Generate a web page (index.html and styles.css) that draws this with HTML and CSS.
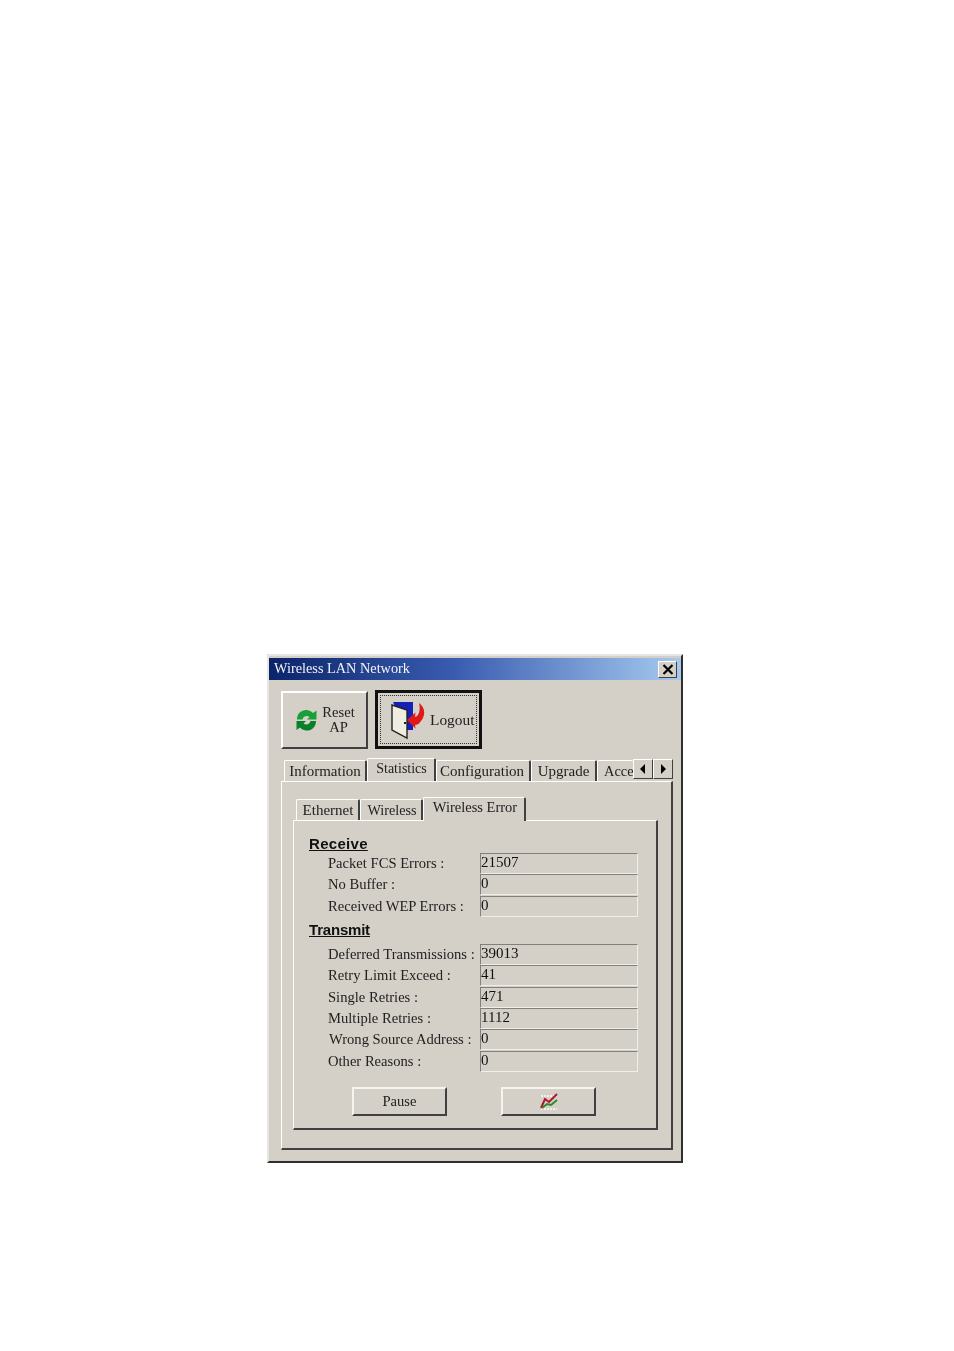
FILE: index.html
```html
<!DOCTYPE html>
<html lang="en">
<head>
<meta charset="utf-8">
<title>Wireless LAN Network</title>
<link rel="stylesheet" href="styles.css">
</head>
<body>
<main class="page">
  <section class="window">
    <header class="titlebar">
      <span class="title">Wireless LAN Network</span>
      <span class="close"><svg viewBox="0 0 12 11" width="12" height="11"><path d="M1.500 1 L10.500 10 M10.500 1 L1.500 10" stroke="#000" stroke-width="2.200" fill="none"/></svg></span>
    </header>
    <div class="toolbar">
      <button class="tool reset">
        <svg viewBox="0 0 24 24" width="24" height="24">
          <path d="M3 11.500 C3 5 8 1.500 13 2 C16 2.500 17.500 3.500 19 5 L22.500 2.500 L22.500 11.500 L13 11.500 L15.500 9 C13.500 7.500 9.500 7.500 8.500 11.500 Z" fill="#18a038"/>
          <path d="M22 13 C22 19.500 17 23 12 22.500 C9 22 7.500 21 6 19.500 L2.500 22 L2.500 13 L12 13 L9.500 15.500 C11.500 17 15.500 17 16.500 13 Z" fill="#0a7f2a"/>
        </svg>
        <span class="reset-label">Reset<br>AP</span>
      </button>
      <button class="tool logout">
        <span class="focus">
          <svg viewBox="0 0 36 40" width="36" height="40">
            <path d="M4 2 H24 V30 H16 Z" fill="#1420b8"/>
            <path d="M3 5 L18 10 V38 L3 30 Z" fill="#efeddf" stroke="#222" stroke-width="1.400"/>
            <rect x="15" y="22" width="2" height="2" fill="#222"/>
            <path d="M30 3 C36 7 37 15 32 21 C30 24 28 25 26 25 L26.500 28.500 L18 20 L26.500 12.500 L26 17 C29 17 32 11 30 3 Z" fill="#e01818"/>
          </svg>
          <span>Logout</span>
        </span>
      </button>
    </div>
    <nav class="tabs outer-tabs">
      <div class="tab-strip">
        <span class="tab t-info">Information</span>
        <span class="tab active t-stat">Statistics</span>
        <span class="tab t-conf">Configuration</span>
        <span class="tab t-upg">Upgrade</span>
        <span class="tab t-acc">Acce</span>
      </div>
      <div class="scrollers">
        <span class="scroll"><svg viewBox="0 0 8 10" width="8" height="10"><path d="M6 0 V10 L1 5 Z" fill="#000"/></svg></span>
        <span class="scroll"><svg viewBox="0 0 8 10" width="8" height="10"><path d="M2 0 V10 L7 5 Z" fill="#000"/></svg></span>
      </div>
    </nav>
    <div class="panel">
      <nav class="tabs inner-tabs">
        <span class="tab t-eth">Ethernet</span>
        <span class="tab t-wl">Wireless</span>
        <span class="tab active t-wle">Wireless Error</span>
      </nav>
      <div class="inner-panel">
        <h2 class="heading first">Receive</h2>
        <div class="rows">
          <div class="row"><label>Packet FCS Errors :</label><output>21507</output></div>
          <div class="row"><label>No Buffer :</label><output>0</output></div>
          <div class="row"><label>Received WEP Errors :</label><output>0</output></div>
        </div>
        <h2 class="heading second">Transmit</h2>
        <div class="rows">
          <div class="row"><label>Deferred Transmissions :</label><output>39013</output></div>
          <div class="row"><label>Retry Limit Exceed :</label><output>41</output></div>
          <div class="row"><label>Single Retries :</label><output>471</output></div>
          <div class="row"><label>Multiple Retries :</label><output>1112</output></div>
          <div class="row"><label class="nudge">Wrong Source Address :</label><output>0</output></div>
          <div class="row"><label>Other Reasons :</label><output>0</output></div>
        </div>
        <div class="actions">
          <button class="action">Pause</button>
          <button class="action">
            <svg class="chart" viewBox="0 0 20 18" width="20" height="18">
              <path d="M2 3 H18 M2 16 H18" stroke="#f2f0e8" stroke-width="2" stroke-dasharray="2 1"/>
              <path d="M2 15 L6 6 L10 9 L18 1" stroke="#b01828" stroke-width="2" fill="none"/>
              <path d="M3 15 L8 11 L12 12 L18 7" stroke="#2c8a2c" stroke-width="2" fill="none"/>
            </svg>
          </button>
        </div>
      </div>
    </div>
  </section>
</main>
</body>
</html>
```
FILE: styles.css
```css
* { box-sizing: border-box; }
html, body { margin: 0; padding: 0; background: #fff; }
.page { width: 954px; height: 1351px; padding: 654px 0 0 267px; overflow: hidden; }

.window {
  width: 416px;
  height: 509px;
  background: #d4d0c8;
  border-style: solid;
  border-width: 2px;
  border-color: #e8e6e0 #303030 #303030 #e8e6e0;
  font-family: "Liberation Serif", serif;
  font-size: 14.600px;
  color: #222;
  filter: blur(0.35px);
}

.titlebar {
  height: 22px;
  margin-top: 2px;
  display: flex;
  align-items: center;
  justify-content: space-between;
  padding: 0 4px 0 5px;
  background: linear-gradient(90deg, #0a246a 0%, #3a5cb0 45%, #a6caf0 100%);
  color: #f4f4f4;
  font-size: 14.300px;
}
.title { position: relative; top: -1px; }
.close {
  width: 19px; height: 17px;
  display: flex; align-items: center; justify-content: center;
  background: #d4d0c8;
  border: 1px solid; border-color: #fff #404040 #404040 #fff;
}

button { font: inherit; color: inherit; background: #d4d0c8; padding: 0; }

.toolbar { display: flex; align-items: flex-start; gap: 7px; padding: 10px 0 0 12px; height: 78px; }
.tool { display: flex; align-items: center; justify-content: center; }
.reset {
  width: 87px; height: 58px; margin-top: 1px;
  gap: 4px;
  border: 2px solid; border-color: #fff #404040 #404040 #fff;
}
.reset-label { line-height: 15px; text-align: center; }
.logout {
  width: 107px; height: 59px;
  border: 3px solid #111;
  padding: 2px;
  font-size: 15.400px;
}
.focus {
  width: 100%; height: 100%;
  display: flex; align-items: center; gap: 5px;
  padding-left: 8px;
  border: 1px dotted #333;
}

.tabs { display: flex; align-items: flex-end; font-size: 15px; }
.tab {
  display: flex; align-items: center; justify-content: center;
  white-space: nowrap;
  height: 21px;
  padding-top: 1px;
  background: #d4d0c8;
  border: solid; border-width: 1px 2px 0 1px;
  border-color: #fff #404040 #fff #fff;
  border-radius: 2px 2px 0 0;
}
.tab.active {
  height: 24px;
  padding-bottom: 5px;
  margin-bottom: -1px;
  position: relative;
  font-size: 14.500px;
}

.outer-tabs { height: 23px; margin-left: 15px; width: 389px; position: relative; z-index: 1; }
.tab-strip { display: flex; align-items: flex-end; width: 349px; height: 100%; overflow: hidden; }
.t-info { width: 83px; flex: none; }
.tab.active.t-stat { width: 69px; flex: none; font-size: 14px; padding-left: 1px; }
.t-conf { width: 95px; flex: none; padding-right: 2px; }
.t-upg { width: 66px; flex: none; }
.t-acc { width: 36px; flex: none; justify-content: flex-start; padding-left: 6px; border-right: 0; font-size: 14.400px; }
.scrollers { display: flex; align-self: flex-start; margin-top: 1px; }
.scroll {
  width: 20px; height: 20px;
  display: flex; align-items: center; justify-content: center;
  background: #d4d0c8;
  border: 1px solid; border-color: #fff #404040 #404040 #fff;
}

.panel {
  width: 392px;
  height: 369px;
  margin-left: 12px;
  padding: 13px 0 0 11px;
  border: solid; border-width: 1px 2px 2px 1px;
  border-color: #fff #404040 #404040 #fff;
}

.inner-tabs { height: 25px; margin-left: 3px; position: relative; z-index: 1; }
.t-eth { width: 64px; padding-left: 1px; }
.t-wl { width: 63px; font-size: 14.200px; padding-left: 2px; }
.t-wle { width: 103px; padding-left: 2px; }

.inner-panel {
  width: 365px;
  height: 310px;
  padding: 15px 0 0 14px;
  border: solid; border-width: 1px 2px 2px 1px;
  border-color: #fff #404040 #404040 #fff;
}

.heading {
  margin: 0 0 1px 1px;
  font: bold 15px/16px "Liberation Sans", sans-serif;
  text-decoration: underline;
  color: #111;
}
.first { letter-spacing: 0.300px; }
.second { margin-top: 5px; margin-bottom: 6px; letter-spacing: -0.200px; }

.rows { display: flex; flex-direction: column; gap: 0.400px; }
.row { display: flex; height: 21px; align-items: stretch; }
.row label { width: 172px; padding-left: 20px; line-height: 21px; white-space: nowrap; }
.row label.nudge { padding-left: 21px; }
.row output {
  width: 158px;
  line-height: 17px;
  font-size: 15px;
  color: #111;
  border: 1px solid; border-color: #808080 #eeeeea #eeeeea #808080;
  border-width: 1.500px 1px 1px 1px;
}

.actions { display: flex; gap: 54px; padding: 15px 0 0 44px; }
.action {
  width: 95px; height: 29px;
  display: flex; align-items: center; justify-content: center;
  border: 2px solid; border-color: #f4f4f0 #404040 #404040 #f4f4f0;
}
.chart { margin-top: 2px; }
```
